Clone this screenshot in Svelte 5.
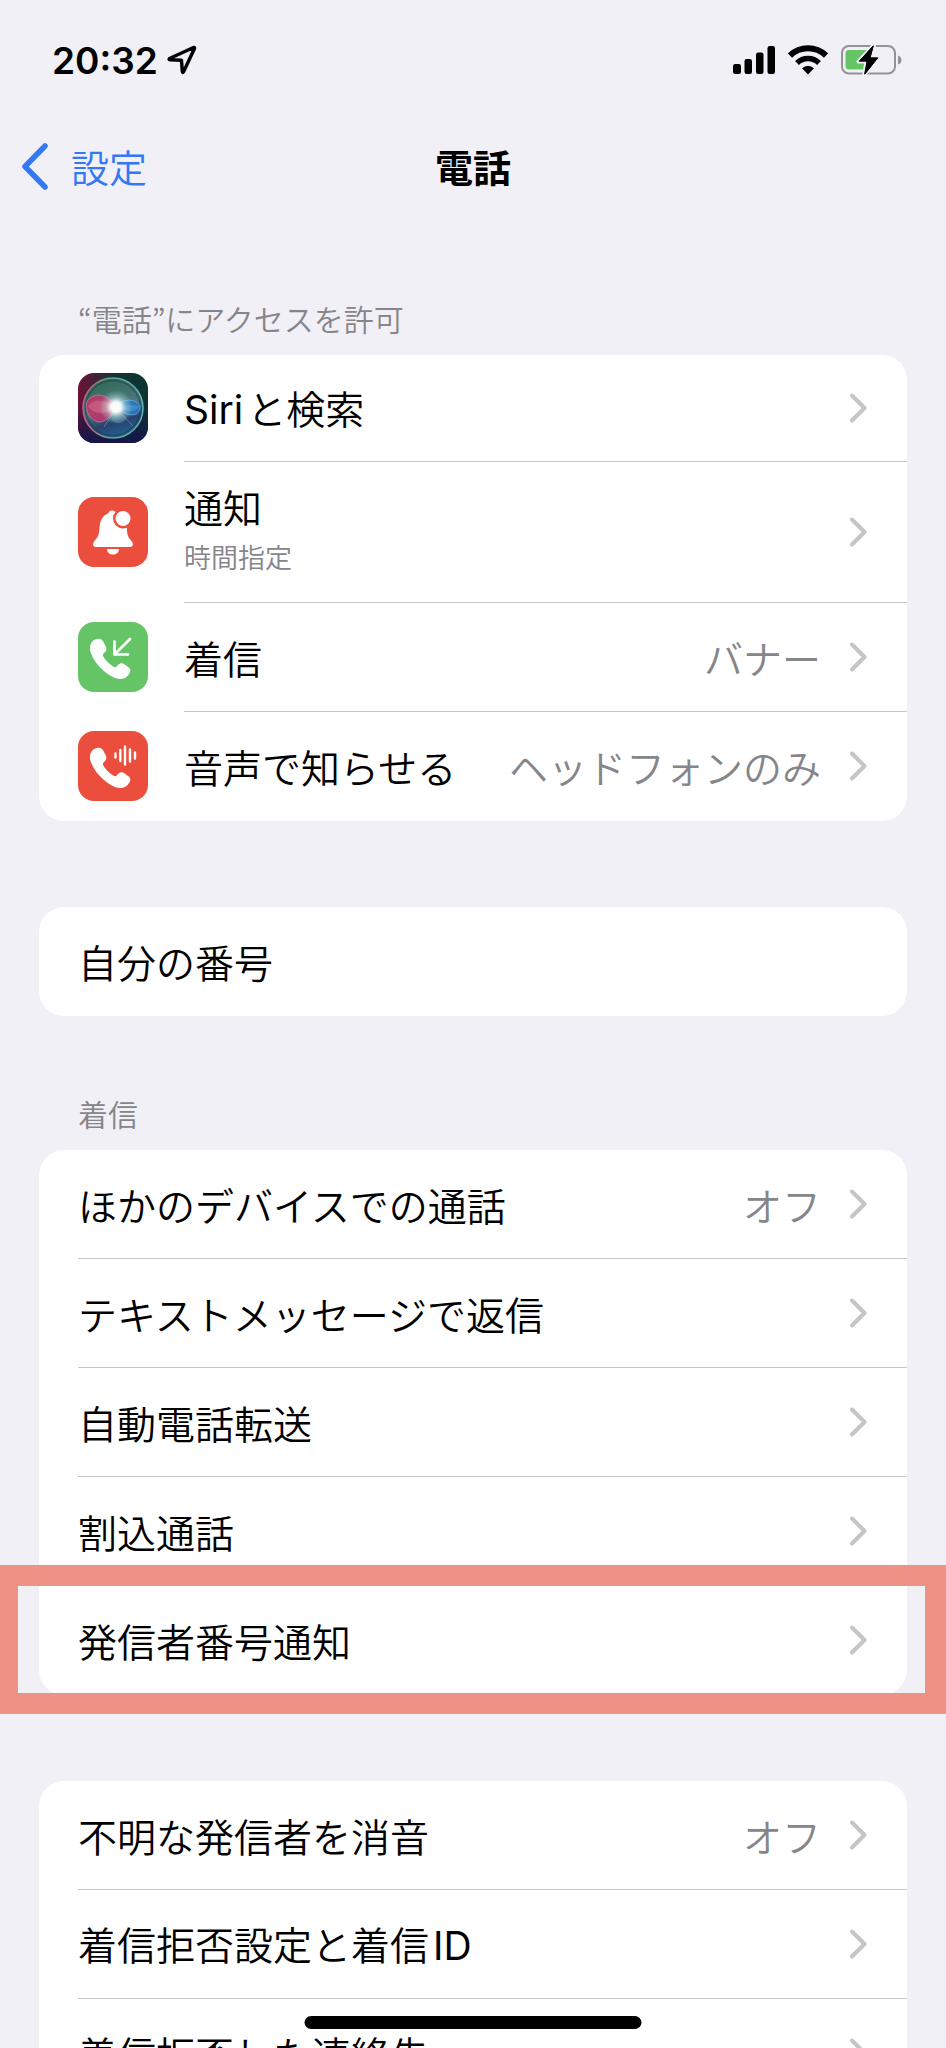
<script lang="ts">
	type IconName = 'siri' | 'bell' | 'incoming' | 'announce';

	interface Row {
		label: string;
		sub?: string;
		value?: string;
		icon?: IconName;
		chevron?: boolean;
		marked?: boolean;
	}

	interface Group {
		title?: string;
		rows: Row[];
	}

	const GROUPS: Group[] = [
		{
			title: '“電話”にアクセスを許可',
			rows: [
				{ label: 'Siriと検索', icon: 'siri' },
				{ label: '通知', sub: '時間指定', icon: 'bell' },
				{ label: '着信', value: 'バナー', icon: 'incoming' },
				{ label: '音声で知らせる', value: 'ヘッドフォンのみ', icon: 'announce' }
			]
		},
		{
			rows: [{ label: '自分の番号', chevron: false }]
		},
		{
			title: '着信',
			rows: [
				{ label: 'ほかのデバイスでの通話', value: 'オフ' },
				{ label: 'テキストメッセージで返信' },
				{ label: '自動電話転送' },
				{ label: '割込通話' },
				{ label: '発信者番号通知', marked: true }
			]
		},
		{
			rows: [
				{ label: '不明な発信者を消音', value: 'オフ' },
				{ label: '着信拒否設定と着信ID' },
				{ label: '着信拒否した連絡先' }
			]
		}
	];

	// latin words sit in their own face, apart from the kana around them
	function parts(label: string) {
		return label.split(/([A-Za-z]+)/).filter(Boolean);
	}
</script>

{#snippet handset()}
	<path
		d="M19 17C22 16 25 18 26 21L28 25C29 28 28 29 26 31C24 33 25 34 27 37C30 41 33 43 36 45C38 46 39 44 40 43C42 41 44 41 46 42L50 45C53 47 53 49 51 52C48 57 43 58 37 56C25 51 14 38 12 28C11.500 22 14 18 19 17Z"
		fill="#fff"
	/>
{/snippet}

<div class="screen">
	<div class="status">
		<div class="clock">
			<span>20:32</span>
			<svg width="30" height="30" viewBox="0 0 30 30" aria-hidden="true">
				<path
					d="M26.500 2.500L2.500 13.500Q1.500 14.500 3 14.700L14.500 15.300L15.300 26.500Q15.600 28.500 16.700 26.500L27.500 3.500Q27.800 2 26.500 2.500Z"
					fill="none"
					stroke="#000"
					stroke-width="3.400"
					stroke-linejoin="round"
				/>
			</svg>
		</div>
		<div class="indicators">
			<svg width="42" height="30" viewBox="0 0 42 30" aria-hidden="true">
				<rect x="0" y="19" width="8" height="10" rx="2.200" />
				<rect x="11.500" y="14" width="7.500" height="15" rx="2.200" />
				<rect x="23" y="7.500" width="7.500" height="21.500" rx="2.200" />
				<rect x="34.500" y="1" width="7.500" height="28" rx="2.200" />
			</svg>
			<svg width="40" height="30" viewBox="0 0 40 30" aria-hidden="true">
				<path d="M2 10.500A26 26 0 0 1 38 10.500" fill="none" stroke="#000" stroke-width="6" />
				<path d="M9 18A16 16 0 0 1 31 18" fill="none" stroke="#000" stroke-width="5.500" />
				<path d="M20 29.500L14 23.300Q20 18 26 23.300Z" />
			</svg>
			<svg width="61" height="32" viewBox="0 0 61 32" aria-hidden="true">
				<rect x="1" y="2" width="53" height="27.500" rx="7" fill="none" stroke="#929297" stroke-width="2" />
				<path d="M57 11.500Q60.500 12.500 60.500 16T57 20.500Z" fill="#929297" />
				<path d="M8 6H28V25.500H8Q4.500 25.500 4.500 22V9.500Q4.500 6 8 6Z" fill="#65c466" />
				<path
					d="M33 1L17.500 17.500H25.500L23 31L37.500 13.500H29.500Z"
					stroke="#f1f0f6"
					stroke-width="4"
					stroke-linejoin="round"
					paint-order="stroke"
				/>
				<path d="M32 2L18.500 17H26.500L24 30L36.500 14H29Z" stroke="#000" stroke-width="1" stroke-linejoin="round" />
			</svg>
		</div>
	</div>

	<header class="nav">
		<button class="back" type="button">
			<svg width="28" height="48" viewBox="0 0 28 48" aria-hidden="true">
				<path
					d="M24 4L4 24.500L24 45"
					fill="none"
					stroke="#3478f6"
					stroke-width="5.500"
					stroke-linecap="round"
					stroke-linejoin="round"
				/>
			</svg>
			<span>設定</span>
		</button>
		<h1>電話</h1>
	</header>

	<main>
		{#each GROUPS as group}
			<section class:titled={group.title}>
				{#if group.title}
					<h2>{group.title}</h2>
				{/if}
				<ul class="card">
					{#each group.rows as row}
						<li class:marked={row.marked}>
							<button class="row {row.icon ?? ''}" type="button">
								{#if row.icon}
									<svg class="icon" viewBox="0 0 70 70" aria-hidden="true">
										{#if row.icon === 'siri'}
											<defs>
												<linearGradient id="siri-side" x1="0" y1="0" x2="1" y2="0">
													<stop offset="0" stop-color="#6b1237" />
													<stop offset="0.500" stop-color="#17323a" />
													<stop offset="1" stop-color="#0b352e" />
												</linearGradient>
												<linearGradient id="siri-low" x1="0" y1="0" x2="0" y2="1">
													<stop offset="0.400" stop-color="#151744" stop-opacity="0" />
													<stop offset="1" stop-color="#15154b" />
												</linearGradient>
												<linearGradient id="siri-orb" x1="0.300" y1="0" x2="0.600" y2="1">
													<stop offset="0" stop-color="#2e6951" />
													<stop offset="0.500" stop-color="#4d7580" />
													<stop offset="0.750" stop-color="#27436f" />
													<stop offset="1" stop-color="#246294" />
												</linearGradient>
												<linearGradient id="siri-ring" x1="0" y1="0.500" x2="1" y2="0.500">
													<stop offset="0" stop-color="#d55487" />
													<stop offset="0.450" stop-color="#5aa889" />
													<stop offset="1" stop-color="#60b3bd" />
												</linearGradient>
												<radialGradient id="siri-flare">
													<stop offset="0" stop-color="#fff" />
													<stop offset="0.300" stop-color="#fff" stop-opacity="0.950" />
													<stop offset="0.600" stop-color="#d5f5f0" stop-opacity="0.400" />
													<stop offset="1" stop-color="#a9eee4" stop-opacity="0" />
												</radialGradient>
											</defs>
											<rect width="70" height="70" rx="16" fill="url(#siri-side)" />
											<rect width="70" height="70" rx="16" fill="url(#siri-low)" />
											<circle cx="35" cy="35" r="30" fill="url(#siri-orb)" stroke="url(#siri-ring)" stroke-width="1.500" />
											<circle cx="35" cy="35" r="27.500" fill="none" stroke="#173c42" stroke-width="1.500" opacity="0.500" />
											<path
												d="M38 34C31 22 18 18 10 27C5 35 12 48 21 49C30 49 34 40 38 34Z"
												fill="#d12f69"
												stroke="#f0709a"
												stroke-width="1"
												opacity="0.750"
											/>
											<path d="M10 33C17 24 28 27 38 34C29 42 16 42 10 33Z" fill="#ef86a4" opacity="0.350" />
											<path
												d="M38 34C45 25 57 25 62 33C63 42 52 47 38 34Z"
												fill="#2678c4"
												stroke="#5fb4e6"
												stroke-width="1"
												opacity="0.850"
											/>
											<path d="M40 35C48 34 55 29 61 34C56 41 47 38 40 35Z" fill="#74b9df" opacity="0.300" />
											<path d="M38 35L26 54M38 35L55 53" stroke="#b8a4bb" stroke-width="1" opacity="0.450" />
											<path d="M38 34L32 45Q39 55 49 46Z" fill="#75cbd0" opacity="0.250" />
											<circle cx="38" cy="34" r="17" fill="url(#siri-flare)" />
										{:else if row.icon === 'bell'}
											<rect width="70" height="70" rx="16" fill="#eb4e3d" />
											<path
												d="M35 13.500C31 13.500 31 15 30 16.500C24 19 22 24 21.500 31C21 38 20 40 16.500 44C14 47 15 50 18 50H52C55 50 56 47 53.500 44C50 40 49 38 49 31V22L38 15Z"
												fill="#fff"
											/>
											<path d="M29 52H41C41 55.500 38.500 57.500 35 57.500S29 55.500 29 52Z" fill="#fff" />
											<circle cx="45" cy="21.500" r="10" fill="#eb4e3d" />
											<circle cx="45" cy="21.500" r="7.500" fill="#fff" />
										{:else if row.icon === 'incoming'}
											<rect width="70" height="70" rx="16" fill="#65c466" />
											{@render handset()}
											<path
												d="M52 17L37 32M36.500 19.500V32.500H50"
												fill="none"
												stroke="#fff"
												stroke-width="2.700"
												stroke-linecap="round"
												stroke-linejoin="round"
											/>
										{:else}
											<rect width="70" height="70" rx="16" fill="#eb4e3d" />
											{@render handset()}
											<path
												d="M37.500 22.500V26.500M42.300 19V30M47 15.500V33.500M52 18.500V30.500M57 21.500V27.500"
												stroke="#fff"
												stroke-width="2.400"
												stroke-linecap="round"
											/>
										{/if}
									</svg>
								{/if}
								<span class="content">
									<span class="text">
										<span class="label">
											{#each parts(row.label) as part}
												<span class:latin={/[A-Za-z]/.test(part)}>{part}</span>
											{/each}
										</span>
										{#if row.sub}
											<span class="sub">{row.sub}</span>
										{/if}
									</span>
									{#if row.value}
										<span class="value">{row.value}</span>
									{/if}
									{#if row.chevron !== false}
										<svg class="chevron" width="18" height="30" viewBox="0 0 18 30" aria-hidden="true">
											<path
												d="M3 2.500L15.500 15L3 27.500"
												fill="none"
												stroke="#c5c5c7"
												stroke-width="4"
												stroke-linecap="round"
												stroke-linejoin="round"
											/>
										</svg>
									{/if}
								</span>
							</button>
						</li>
					{/each}
				</ul>
			</section>
		{/each}
	</main>

	<div class="home-bar"></div>
</div>

<style>
	:global(body) {
		background: #f1f0f6;
	}
	.screen {
		position: relative;
		height: 100vh;
		overflow: hidden;
		background: #f1f0f6;
		color: #000;
		font-family: 'Noto Sans CJK JP', sans-serif;
		font-size: 39px;
		font-weight: 350;
	}
	button {
		margin: 0;
		padding: 0;
		border: 0;
		background: none;
		color: inherit;
		font: inherit;
		text-align: left;
		cursor: pointer;
	}
	svg {
		display: block;
		flex: none;
	}

	.status {
		display: flex;
		justify-content: space-between;
		align-items: center;
		height: 120px;
		padding: 0 44px 0 52px;
	}
	.clock {
		display: flex;
		align-items: center;
		gap: 9px;
		font-family: Inter, sans-serif;
		font-size: 37px;
		font-weight: 600;
	}
	.indicators {
		display: flex;
		align-items: center;
		gap: 13px;
	}

	.nav {
		display: grid;
		grid-template-columns: 1fr auto 1fr;
		align-items: center;
		height: 92px;
		padding: 0 21px;
		font-size: 38px;
		line-height: 50px;
	}
	.back {
		display: flex;
		align-items: center;
		gap: 22px;
		color: #3478f6;
	}
	h1 {
		margin: 0;
		font-size: 38px;
		font-weight: 700;
	}

	main {
		padding: 9px 39px 0;
	}
	section {
		margin-top: 86px;
	}
	section.titled {
		margin-top: 77px;
	}
	h2 {
		margin: 0;
		padding: 0 39px 17px;
		color: #85858a;
		font-size: 30px;
		font-weight: 350;
		line-height: 40px;
	}
	.card {
		margin: 0;
		padding: 0;
		list-style: none;
		background: #fff;
		border-radius: 25px;
	}
	li {
		position: relative;
	}
	.row {
		display: flex;
		align-items: center;
		gap: 36px;
		width: 100%;
		height: 109px;
		padding-left: 39px;
	}
	.row.siri {
		height: 107px;
	}
	.row.bell {
		height: 141px;
	}
	.icon {
		width: 70px;
		height: 70px;
		margin-bottom: 1px;
	}
	.content {
		display: flex;
		flex: 1;
		align-items: center;
		align-self: stretch;
		gap: 28px;
		padding-right: 40px;
		border-bottom: 1px solid #c6c6c8;
	}
	li:last-child .content {
		border-bottom-color: transparent;
	}
	.text {
		display: flex;
		flex: 1;
		flex-direction: column;
		gap: 8px;
	}
	.label {
		display: flex;
		align-items: baseline;
		gap: 4px;
		line-height: 50px;
	}
	.latin {
		font-family: Inter, sans-serif;
		font-weight: 400;
	}
	.sub {
		padding-bottom: 8px;
		color: #85858a;
		font-size: 27px;
		line-height: 36px;
	}
	.value {
		color: #85858a;
	}

	/* frame drawn round the selected row, out to both edges of the screen */
	.marked::after {
		content: '';
		position: absolute;
		z-index: 1;
		inset: -21px -39px -19px;
		border: 21px solid #ef9184;
		border-left-width: 18px;
		pointer-events: none;
	}

	.home-bar {
		position: absolute;
		bottom: 19px;
		left: 50%;
		width: 337px;
		height: 13px;
		border-radius: 7px;
		background: #000;
		transform: translateX(-50%);
	}
</style>
